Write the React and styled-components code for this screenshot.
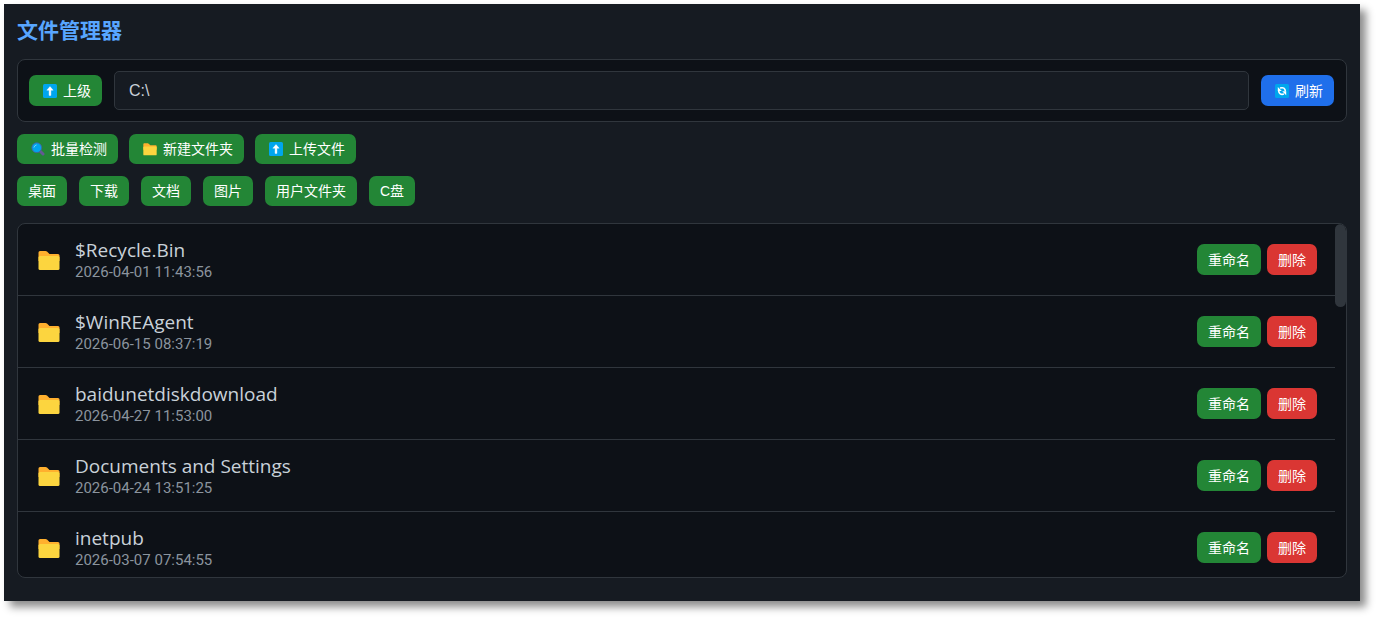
import { useState } from 'react';
import styled, { createGlobalStyle } from 'styled-components';

const GlobalStyle = createGlobalStyle`
  * {
    box-sizing: border-box;
  }

  body {
    margin: 0;
    background: #ffffff;
    color: #c9d1d9;
    font-family: 'Open Sans', 'Noto Sans CJK SC', sans-serif;
  }
`;

const Page = styled.div`
  display: flex;
  height: 100vh;
  min-height: 420px;
  padding: 4px 18px 18px 4px;
`;

const Panel = styled.main`
  flex: 1;
  min-width: 0;
  display: flex;
  flex-direction: column;
  padding: 12px 13px 23px;
  background: #161b22;
  box-shadow: 6px 6px 8px rgba(0, 0, 0, 0.45);
`;

const Title = styled.h1`
  margin: 0 0 16px;
  font-family: 'Noto Sans CJK SC', sans-serif;
  font-size: 21px;
  line-height: 27px;
  font-weight: 700;
  color: #58a6ff;
`;

const PathBar = styled.form`
  display: flex;
  align-items: center;
  gap: 12px;
  padding: 11px 12px 11px 11px;
  margin-bottom: 12px;
  background: #0d1117;
  border: 1px solid #30363d;
  border-radius: 8px;
`;

const PathInput = styled.input`
  flex: 1;
  min-width: 0;
  height: 39px;
  padding: 0 14px;
  background: #161b22;
  border: 1px solid #30363d;
  border-radius: 5px;
  color: #c9d1d9;
  font-family: 'Liberation Sans', Arial, sans-serif;
  font-size: 16px;
  outline: none;
`;

const colors = {
  green: '#238636',
  blue: '#1f6feb',
  red: '#da3633',
};

const Button = styled.button`
  display: inline-flex;
  align-items: center;
  flex-shrink: 0;
  height: ${props => (props.$tall ? 31 : 30)}px;
  padding: 0 11px;
  background: ${props => colors[props.$color || 'green']};
  border: none;
  border-radius: 7px;
  color: #ffffff;
  font-family: 'Liberation Sans', 'Noto Sans CJK SC', sans-serif;
  font-size: 14px;
  line-height: 20px;
  white-space: nowrap;
  cursor: pointer;

  &:hover {
    filter: brightness(1.1);
  }
`;

const ButtonIcon = styled.svg`
  width: 14px;
  height: 14px;
  margin: 0 6px 0 3px;
`;

const Toolbar = styled.div`
  display: flex;
  flex-wrap: wrap;
  gap: ${props => props.$gap}px;
  margin-bottom: ${props => props.$space}px;
`;

const ListFrame = styled.div`
  flex: 1;
  min-height: 0;
  display: flex;
  overflow: hidden;
  background: #0d1117;
  border: 1px solid #30363d;
  border-radius: 8px;
`;

const FileList = styled.ul`
  flex: 1;
  min-width: 0;
  margin: 0;
  padding: 0;
  list-style: none;
  overflow-y: auto;
  scrollbar-width: none;
`;

const ScrollTrack = styled.div`
  width: 11px;
  flex-shrink: 0;
`;

const ScrollThumb = styled.div`
  height: 83px;
  background: #30363d;
  border-radius: 6px;
`;

const FileRow = styled.li`
  display: flex;
  align-items: center;
  height: 72px;
  padding: 0 18px 0 20px;
  border-bottom: 1px solid #30363d;
`;

const FolderIcon = styled.svg`
  flex-shrink: 0;
  width: 22px;
  height: 22px;
  margin-right: 15px;
`;

const FileInfo = styled.div`
  flex: 1;
  min-width: 0;
`;

const FileName = styled.div`
  font-size: 19px;
  line-height: 26px;
  white-space: nowrap;
`;

const FileDate = styled.div`
  font-family: Roboto, sans-serif;
  font-size: 15px;
  line-height: 19px;
  color: #8b949e;
`;

const Actions = styled.div`
  display: flex;
  gap: 6px;
`;

const shortcuts = ['桌面', '下载', '文档', '图片', '用户文件夹', 'C盘'];

const files = [
  { name: '$Recycle.Bin', date: '2026-04-01 11:43:56' },
  { name: '$WinREAgent', date: '2026-06-15 08:37:19' },
  { name: 'baidunetdiskdownload', date: '2026-04-27 11:53:00' },
  { name: 'Documents and Settings', date: '2026-04-24 13:51:25' },
  { name: 'inetpub', date: '2026-03-07 07:54:55' },
];

function FolderShape() {
  return (
    <>
      <path d="M0.5 3.5Q0.5 2 2 2H7.5Q8.4 2 9 2.6L11.5 5H20Q21.5 5 21.5 6.5V12H0.5Z" fill="#ffb02e" />
      <path d="M0.5 8.5Q0.5 7 2 7H20Q21.5 7 21.5 8.5V19.5Q21.5 21 20 21H2Q0.5 21 0.5 19.5Z" fill="#fcd53f" />
    </>
  );
}

function UpIcon() {
  return (
    <ButtonIcon viewBox="0 0 14 14" aria-hidden="true">
      <rect width="14" height="14" rx="1.5" fill="#00a6ed" />
      <path d="M7 2.6L10.2 6.2H7.9V11.4H6.1V6.2H3.8Z" fill="#fff" stroke="#fff" strokeWidth="0.4" strokeLinejoin="round" />
    </ButtonIcon>
  );
}

function SearchIcon() {
  return (
    <ButtonIcon viewBox="0 0 14 14" aria-hidden="true">
      <path d="M9 9L12 12" stroke="#635994" strokeWidth="3" strokeLinecap="round" />
      <circle cx="5.7" cy="5.7" r="4.9" fill="#00a6ed" stroke="#46609c" strokeWidth="0.9" />
      <path d="M3 5.2Q3.4 3.4 5.2 3" stroke="#7fd4ff" strokeWidth="0.9" fill="none" strokeLinecap="round" />
    </ButtonIcon>
  );
}

function RefreshIcon() {
  return (
    <ButtonIcon viewBox="0 0 14 14" aria-hidden="true">
      <rect width="14" height="14" rx="1.5" fill="#00a6ed" />
      <path d="M5 4.1Q10 2.6 10.4 7.4M9 10.1Q4.2 11.4 3.6 6.7" stroke="#fff" strokeWidth="1.6" fill="none" />
      <path d="M2.8 3V7H6.8ZM11.2 11.2V7.2H7.2Z" fill="#fff" />
    </ButtonIcon>
  );
}

export default function App() {
  const [path, setPath] = useState('C:\\');

  return (
    <Page>
      <GlobalStyle />
      <Panel>
        <Title>文件管理器</Title>

        <PathBar onSubmit={e => e.preventDefault()}>
          <Button type="button" $tall><UpIcon />上级</Button>
          <PathInput aria-label="路径" value={path} onChange={e => setPath(e.target.value)} />
          <Button type="submit" $color="blue" $tall><RefreshIcon />刷新</Button>
        </PathBar>

        <Toolbar $gap={11} $space={12}>
          <Button type="button"><SearchIcon />批量检测</Button>
          <Button type="button">
            <ButtonIcon viewBox="0 0 22 22" aria-hidden="true"><FolderShape /></ButtonIcon>
            新建文件夹
          </Button>
          <Button type="button"><UpIcon />上传文件</Button>
        </Toolbar>

        <Toolbar $gap={12} $space={17}>
          {shortcuts.map(label => (
            <Button type="button" key={label}>{label}</Button>
          ))}
        </Toolbar>

        <ListFrame>
          <FileList>
            {files.map(file => (
              <FileRow key={file.name}>
                <FolderIcon viewBox="0 0 22 22" aria-hidden="true"><FolderShape /></FolderIcon>
                <FileInfo>
                  <FileName>{file.name}</FileName>
                  <FileDate>{file.date}</FileDate>
                </FileInfo>
                <Actions>
                  <Button type="button" $tall>重命名</Button>
                  <Button type="button" $color="red" $tall>删除</Button>
                </Actions>
              </FileRow>
            ))}
          </FileList>
          <ScrollTrack>
            <ScrollThumb />
          </ScrollTrack>
        </ListFrame>
      </Panel>
    </Page>
  );
}
